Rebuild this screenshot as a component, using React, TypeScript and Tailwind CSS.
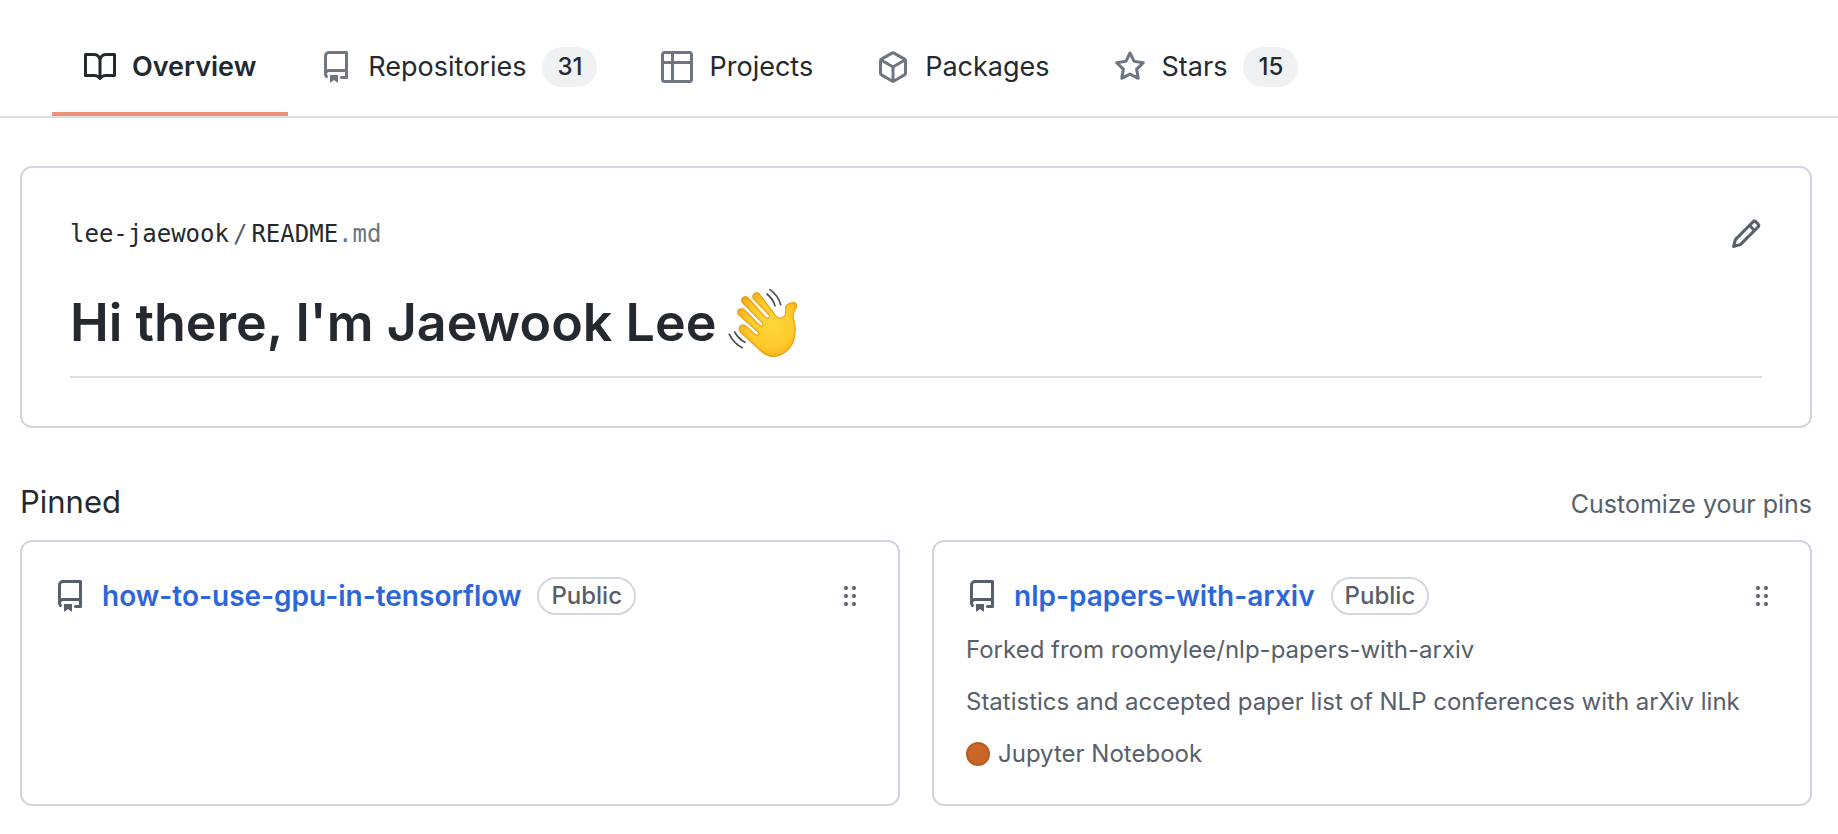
import type { ReactNode } from "react";

const paths = {
  book: "M0 1.75A.75.75 0 01.75 1h4.253c1.227 0 2.317.59 3 1.501A3.744 3.744 0 0111.006 1h4.245a.75.75 0 01.75.75v10.5a.75.75 0 01-.75.75h-4.507a2.25 2.25 0 00-1.591.659l-.622.621a.75.75 0 01-1.06 0l-.622-.621A2.25 2.25 0 005.258 13H.75a.75.75 0 01-.75-.75V1.75zm8.755 3a2.25 2.25 0 012.25-2.25H14.5v9h-3.757c-.71 0-1.4.201-1.992.572l.004-7.322zm-1.504 7.324l.004-5.073-.002-2.253A2.25 2.25 0 005.003 2.5H1.5v9h3.757a3.75 3.75 0 011.994.574z",
  repo: "M2 2.5A2.5 2.5 0 014.5 0h8.75a.75.75 0 01.75.75v12.5a.75.75 0 01-.75.75h-2.5a.75.75 0 110-1.5h1.75v-2h-8a1 1 0 00-.714 1.7.75.75 0 01-1.072 1.05A2.495 2.495 0 012 11.5v-9zm10.5-1V9h-8c-.356 0-.694.074-1 .208V2.5a1 1 0 011-1h8zM5 12.25v3.25a.25.25 0 00.4.2l1.45-1.087a.25.25 0 01.3 0L8.6 15.7a.25.25 0 00.4-.2v-3.25a.25.25 0 00-.25-.25h-3.5a.25.25 0 00-.25.25z",
  table: "M0 1.75C0 .784.784 0 1.75 0h12.5C15.216 0 16 .784 16 1.75v3.585a.746.746 0 010 .83v8.085A1.75 1.75 0 0114.25 16H6.309a.748.748 0 01-1.118 0H1.75A1.75 1.75 0 010 14.25V6.165a.746.746 0 010-.83V1.75zM1.5 6.5v7.75c0 .138.112.25.25.25H5v-8H1.5zM5 5H1.5V1.75a.25.25 0 01.25-.25H5V5zm1.5 1.5v8h7.75a.25.25 0 00.25-.25V6.5h-8zm8-1.5h-8V1.5h7.75a.25.25 0 01.25.25V5z",
  package: "M8.878.392a1.75 1.75 0 00-1.756 0l-5.25 3.045A1.75 1.75 0 001 4.951v6.098c0 .624.332 1.2.872 1.514l5.25 3.045a1.75 1.75 0 001.756 0l5.25-3.045c.54-.313.872-.89.872-1.514V4.951c0-.624-.332-1.2-.872-1.514L8.878.392zM7.875 1.69a.25.25 0 01.25 0l4.63 2.685L8 7.133 3.245 4.375l4.63-2.685zM2.5 5.677v5.372c0 .09.047.171.125.216l4.625 2.683V8.432L2.5 5.677zm6.25 8.271l4.625-2.683a.25.25 0 00.125-.216V5.677L8.75 8.432v5.516z",
  star: "M8 .25a.75.75 0 01.673.418l1.882 3.815 4.21.612a.75.75 0 01.416 1.279l-3.046 2.97.719 4.192a.75.75 0 01-1.088.791L8 12.347l-3.766 1.98a.75.75 0 01-1.088-.79l.72-4.194L.818 6.374a.75.75 0 01.416-1.28l4.21-.611L7.327.668A.75.75 0 018 .25zm0 2.445L6.615 5.5a.75.75 0 01-.564.41l-3.097.45 2.24 2.184a.75.75 0 01.216.664l-.528 3.084 2.769-1.456a.75.75 0 01.698 0l2.77 1.456-.53-3.084a.75.75 0 01.216-.664l2.24-2.183-3.096-.45a.75.75 0 01-.564-.41L8 2.694v.001z",
  pencil: "M11.013 1.427a1.75 1.75 0 012.474 0l1.086 1.086a1.75 1.75 0 010 2.474l-8.61 8.61c-.21.21-.47.364-.756.445l-3.251.93a.75.75 0 01-.927-.928l.929-3.25a1.75 1.75 0 01.445-.758l8.61-8.61zm1.414 1.06a.25.25 0 00-.354 0L10.811 3.75l1.439 1.44 1.263-1.263a.25.25 0 000-.354l-1.086-1.086zM11.189 6.25L9.75 4.81l-6.286 6.287a.25.25 0 00-.064.108l-.558 1.953 1.953-.558a.249.249 0 00.108-.064l6.286-6.286z",
  grabber: "M10 13a1 1 0 100-2 1 1 0 000 2zm-4 0a1 1 0 100-2 1 1 0 000 2zm1-5a1 1 0 11-2 0 1 1 0 012 0zm3 1a1 1 0 100-2 1 1 0 000 2zm1-5a1 1 0 11-2 0 1 1 0 012 0zM6 5a1 1 0 100-2 1 1 0 000 2z",
};

type IconName = keyof typeof paths;

function Icon({ name, className = "" }: { name: IconName; className?: string }) {
  return (
    <svg viewBox="0 0 16 16" fill="currentColor" fillRule="evenodd" aria-hidden="true" className={`size-8 shrink-0 ${className}`}>
      <path d={paths[name]} />
    </svg>
  );
}

const handOutline =
  "M83 41C76 30 90 14 102 24L152 90C158 97 164 99 171 95C180 90 181 82 179 70C179 58 190 51 205 51C214 52 219 60 213 68C206 80 204 90 206 102C211 116 212 130 210 146C207 182 186 204 158 213C138 219 120 211 104 196L46 143C32 130 46 111 61 120L90 145C96 151 102 148 98 142L40 90C28 76 45 62 58 72L102 117C108 123 114 120 109 113L51 54C40 40 58 26 70 37L121 94C128 100 134 95 129 89Z";

function WavingHand() {
  return (
    <svg viewBox="8 8 210 210" role="img" aria-label="Waving hand" className="size-[70px] shrink-0">
      <defs>
        <radialGradient id="skin" gradientUnits="userSpaceOnUse" cx="138" cy="115" r="115">
          <stop offset="0" stopColor="#ffd63c" />
          <stop offset="0.6" stopColor="#ffcb2b" />
          <stop offset="0.85" stopColor="#f9b51f" />
          <stop offset="1" stopColor="#f2a516" />
        </radialGradient>
        <clipPath id="hand">
          <path d={handOutline} />
        </clipPath>
      </defs>
      <path d={handOutline} fill="url(#skin)" />
      <g clipPath="url(#hand)" fill="none" stroke="#e08c0a">
        <path d={handOutline} strokeOpacity="0.25" strokeWidth="10" />
        <path d={handOutline} strokeOpacity="0.65" strokeWidth="4" />
      </g>
      <path
        d="M125 18Q143 33 149 53M134 5Q159 23 166 50M28 132Q39 152 59 163M12 139Q25 166 51 179"
        transform="translate(0 8)"
        fill="none"
        stroke="#4b4f54"
        strokeWidth="5"
        strokeLinecap="round"
      />
    </svg>
  );
}

function Tab({ icon, label, count, active }: { icon: IconName; label: string; count?: number; active?: boolean }) {
  return (
    <a
      href="#"
      aria-current={active ? "page" : undefined}
      className={`flex items-center gap-4 border-b-4 px-8 pt-1.5 text-[27px] leading-10 ${
        active ? "border-[#ec9277] font-semibold" : "border-transparent"
      }`}
    >
      <Icon name={icon} className={active ? "text-[#24292f]" : "text-[#6e7781]"} />
      {label}
      {count !== undefined && (
        <span className="rounded-full bg-[#eff1f3] px-[15px] text-2xl leading-10 font-medium">{count}</span>
      )}
    </a>
  );
}

function RepoCard({ name, children }: { name: string; children?: ReactNode }) {
  return (
    <li className="flex flex-col rounded-xl border-2 border-[#d0d7de] px-8 pt-[34px] pb-8 text-[#57606a]">
      <div className="flex items-center">
        <Icon name="repo" className="mr-4" />
        <a href="#" className="text-[28px] leading-10 font-semibold text-[#2c66d8]">
          {name}
        </a>
        <span className="ml-4 rounded-full border-2 border-[#d0d7de] px-3 text-2xl leading-[34px] font-medium">Public</span>
        <button type="button" aria-label="Reorder pin" className="ml-auto">
          <Icon name="grabber" />
        </button>
      </div>
      {children}
    </li>
  );
}

export default function App() {
  return (
    <div className="bg-white font-['Inter','Liberation_Sans',sans-serif] text-[#24292f]">
      <nav aria-label="Profile" className="flex h-[118px] items-stretch border-b-2 border-[#d8dee4] pt-4 pl-[52px]">
        <Tab icon="book" label="Overview" active />
        <Tab icon="repo" label="Repositories" count={31} />
        <Tab icon="table" label="Projects" />
        <Tab icon="package" label="Packages" />
        <Tab icon="star" label="Stars" count={15} />
      </nav>
      <main className="pt-12 pr-[26px] pl-5">
        <section className="rounded-xl border-2 border-[#d0d7de] p-12">
          <div className="flex items-center justify-between">
            <p className="flex font-['DejaVu_Sans_Mono','Liberation_Mono',monospace] text-2xl leading-9">
              <a href="#">lee-jaewook</a>
              <span className="px-1 text-[#57606a]">/</span>
              <a href="#">
                README<span className="text-[#6e7781]">.md</span>
              </a>
            </p>
            <button type="button" aria-label="Edit README" className="text-[#57606a]">
              <Icon name="pencil" />
            </button>
          </div>
          <h1 className="mt-9 flex items-center gap-3 border-b-2 border-[#d8dee4] pb-[18px] text-[52px] leading-[70px] font-semibold">
            Hi there, I'm Jaewook Lee <WavingHand />
          </h1>
        </section>
        <div className="mt-[50px] flex items-baseline justify-between">
          <h2 className="text-[31px] leading-12">Pinned</h2>
          <button type="button" className="text-[25px] leading-9 text-[#57606a]">
            Customize your pins
          </button>
        </div>
        <ul className="mt-3.5 grid grid-cols-2 gap-8">
          <RepoCard name="how-to-use-gpu-in-tensorflow" />
          <RepoCard name="nlp-papers-with-arxiv">
            <p className="mt-4 text-2xl leading-9">Forked from roomylee/nlp-papers-with-arxiv</p>
            <p className="mt-4 text-2xl leading-9">Statistics and accepted paper list of NLP conferences with arXiv link</p>
            <p className="mt-4 flex items-center gap-2 text-2xl leading-9">
              <span className="size-6 rounded-full border-2 border-[#b85c25] bg-[#c96526]" />
              Jupyter Notebook
            </p>
          </RepoCard>
        </ul>
      </main>
    </div>
  );
}
